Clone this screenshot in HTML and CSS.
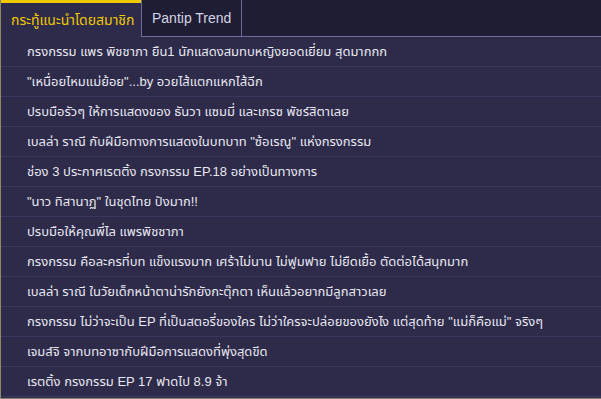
FILE: index.html
```html
<!DOCTYPE html>
<html lang="th">
<head>
  <meta charset="UTF-8">
  <title>Pantip</title>
  <link rel="stylesheet" href="styles.css">
</head>
<body>
  <div class="box">
    <div class="tabs">
      <div class="tab active">กระทู้แนะนำโดยสมาชิก</div>
      <div class="tab">Pantip Trend</div>
      <div class="tab-fill"></div>
    </div>
    <ul class="list">
      <li>กรงกรรม แพร พิชชาภา ยืน1 นักแสดงสมทบหญิงยอดเยี่ยม สุดมากกก</li>
      <li>"เหนื่อยไหมแม่ย้อย"...by อวยไส้แตกแหกไส้ฉีก</li>
      <li>ปรบมือรัวๆ ให้การแสดงของ ธันวา แซมมี่ และเกรซ พัชร์สิตาเลย</li>
      <li>เบลล่า ราณี กับฝีมือทางการแสดงในบทบาท "ซ้อเรณู" แห่งกรงกรรม</li>
      <li>ช่อง 3 ประกาศเรตติ้ง กรงกรรม EP.18 อย่างเป็นทางการ</li>
      <li>"นาว ทิสานาฏ" ในชุดไทย ปังมาก!!</li>
      <li>ปรบมือให้คุณพี่ไล แพรพิชชาภา</li>
      <li>กรงกรรม คือละครที่บท แข็งแรงมาก เศร้าไม่นาน ไม่ฟูมฟาย ไม่ยืดเยื้อ ตัดต่อได้สนุกมาก</li>
      <li>เบลล่า ราณี ในวัยเด็กหน้าตาน่ารักยังกะตุ๊กตา เห็นแล้วอยากมีลูกสาวเลย</li>
      <li>กรงกรรม ไม่ว่าจะเป็น EP ที่เป็นสตอรี่ของใคร ไม่ว่าใครจะปล่อยของยังไง แต่สุดท้าย "แม่ก็คือแม่" จริงๆ</li>
      <li>เจมส์จิ จากบทอาซากับฝีมือการแสดงที่พุ่งสุดขีด</li>
      <li>เรตติ้ง กรงกรรม EP 17 ฟาดไป 8.9 จ้า</li>
    </ul>
  </div>
</body>
</html>
```

FILE: styles.css
```css
html, body { margin: 0; padding: 0; background: #1f1d33; }
body { font-family: Tahoma, "Liberation Sans", "Noto Sans Thai", "Noto Sans", sans-serif; font-size: 13px; color: #e8e8f0; }
.box { width: 100%; height: 399px; border-left: 1px solid #8a8668; border-bottom: 1px solid #8a8668; box-sizing: border-box; background: #2d2a4a; overflow: hidden; }
.tabs { display: flex; height: 37px; background: #1f1d33; }
.tab { padding: 0 10px; line-height: 36px; border: 1px solid #6d6b98; border-top: 0; color: #d4d4e4; font-size: 14px; }
.tab.active { width: 140px; box-sizing: border-box; padding: 0 0 0 10px; line-height: 34px; background: #2d2a4a; border: 0; border-top: 3px solid #f0c800; color: #f0c800; font-size: 14px; white-space: nowrap; }
.tab-fill { flex: 1; border-bottom: 1px solid #6d6b98; }
.list { list-style: none; margin: 0; padding: 0; }
.list li { height: 29px; line-height: 30px; padding-left: 26px; border-bottom: 1px solid #3a3760; white-space: nowrap; }
```
